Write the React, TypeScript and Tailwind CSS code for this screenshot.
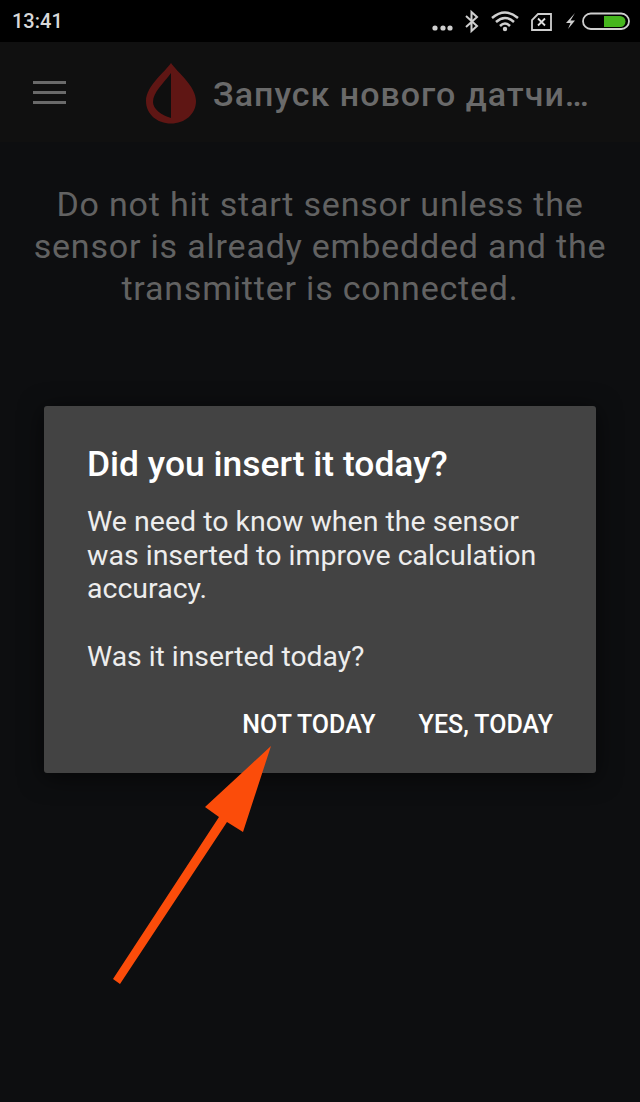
export default function App() {
  return (
    <div className="relative w-[640px] h-[1102px] overflow-hidden bg-[#0d0e10] font-['Roboto',sans-serif]">
      <div className="h-[42px] bg-black flex items-center justify-between pl-[12px]">
        <span className="text-[20px] font-medium text-[#d8d8d8]">13:41</span>
        <svg width="214" height="42" viewBox="0 0 214 42" fill="none">
          <circle cx="9" cy="28" r="2.600" fill="#cfcfcf" />
          <circle cx="17" cy="28" r="2.600" fill="#cfcfcf" />
          <circle cx="24" cy="28" r="2.600" fill="#cfcfcf" />
          <path d="M40 16 L51 26 L45.500 31 V12 L51 17 L40 27" stroke="#cfcfcf" strokeWidth="2" />
          <path d="M66 18 Q79 7 92 18" stroke="#cfcfcf" strokeWidth="2.500" />
          <path d="M70 22 Q79 14 88 22" stroke="#cfcfcf" strokeWidth="2.500" />
          <path d="M74 26 Q79 21 84 26" stroke="#cfcfcf" strokeWidth="2.500" />
          <circle cx="79" cy="29" r="2.200" fill="#cfcfcf" />
          <path d="M112 14 H125 V30 H106 V20 Z" stroke="#cfcfcf" strokeWidth="1.800" />
          <path d="M112 18.500 L119 25.500 M119 18.500 L112 25.500" stroke="#e0e0e0" strokeWidth="1.800" />
          <path d="M149 13 L140 23 H144.500 L142 29 L149 20.500 H144.500 Z" fill="#cfcfcf" />
          <rect x="157" y="13.500" width="46" height="15.500" rx="7.750" stroke="#cfcfcf" strokeWidth="1.800" />
          <path d="M178 16 H194 A5.500 5.500 0 0 1 194 27 H178 Z" fill="#46b61e" />
        </svg>
      </div>
      <div className="h-[100px] bg-[#101010] flex items-center pl-[33px]">
        <div className="flex flex-col gap-[7px] w-[33px]">
          <div className="h-[3px] bg-[#6a6a6a]" />
          <div className="h-[3px] bg-[#6a6a6a]" />
          <div className="h-[3px] bg-[#6a6a6a]" />
        </div>
        <svg className="ml-[80px] mt-[3px]" width="50" height="61" viewBox="0 0 50 61">
          <path d="M25 0 C19 9 0 23 0 38 C0 51 11 60.500 25 60.500 C39 60.500 50 51 50 38 C50 23 31 9 25 0 Z" fill="#5f1614" />
          <path d="M25 10 C18 20 7 29 7 39 C7 46 15 52 25 55 Z" fill="#0f0f0f" />
        </svg>
        <span className="ml-[17px] mt-[5px] text-[34px] font-medium tracking-[1px] text-[#6a6a6a] whitespace-nowrap">Запуск нового датчи…</span>
      </div>
      <p className="mt-[41px] px-[20px] text-center text-[34px] leading-[42px] tracking-[0.8px] text-[#626262]">
        Do not hit start sensor unless the sensor is already embedded and the transmitter is connected.
      </p>
      <div className="mt-[97px] mx-[44px] h-[367px] rounded-[3px] bg-[#434343] pt-[38px] pl-[43px] pr-[43px] flex flex-col shadow-[0_4px_24px_rgba(0,0,0,0.6)]">
        <h2 className="text-[35.400px] leading-[40px] font-medium text-white whitespace-nowrap">Did you insert it today?</h2>
        <p className="mt-[21px] text-[28.500px] leading-[33.500px] text-[#ededed]">
          We need to know when the sensor was inserted to improve calculation accuracy.
        </p>
        <p className="mt-[34px] text-[28.300px] leading-[33.500px] text-[#ededed]">Was it inserted today?</p>
        <div className="mt-[38px] flex justify-end gap-[43px]">
          <span className="text-[25px] leading-[28px] font-medium text-white">NOT TODAY</span>
          <span className="text-[25px] leading-[28px] font-medium text-white">YES, TODAY</span>
        </div>
      </div>
      <svg className="absolute left-0 top-0" width="640" height="1102" viewBox="0 0 640 1102">
        <path d="M271 746 L205 807 L219 817 L113 979 L120 984 L227 822 L243 832 Z" fill="#fb4c0a" />
      </svg>
    </div>
  );
}
